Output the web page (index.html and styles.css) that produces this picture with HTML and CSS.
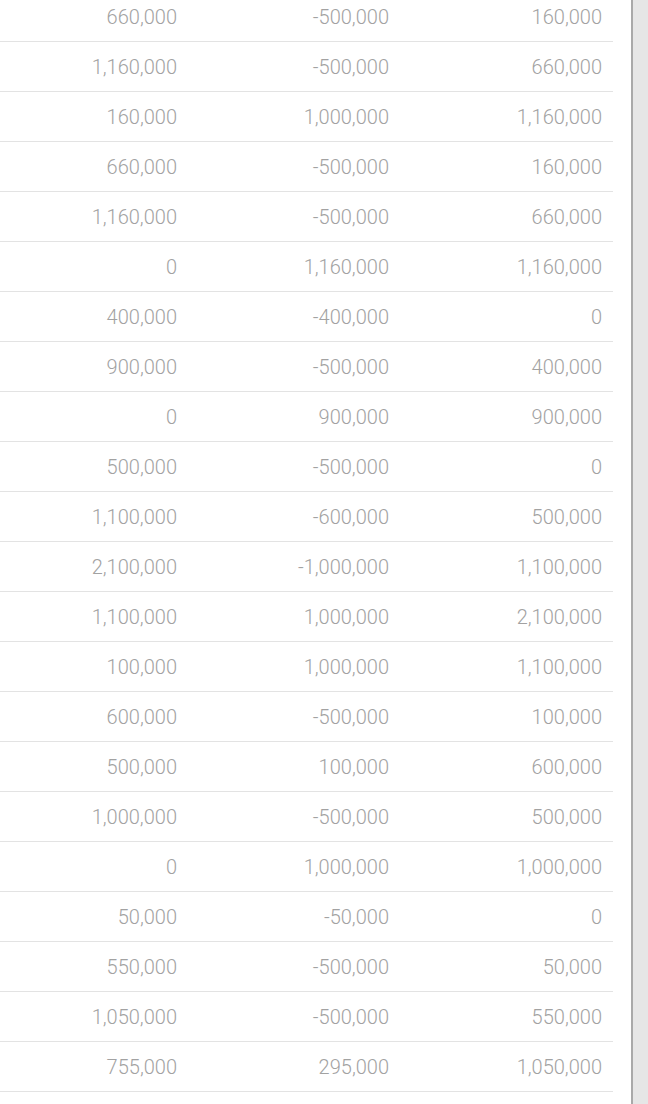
FILE: index.html
```html
<!DOCTYPE html>
<html>
<head>
<meta charset="utf-8">
<link rel="stylesheet" href="styles.css">
</head>
<body>
<div class="page">
  <div class="content">
    <div class="table">
      <div class="row"><span>660,000</span><span>-500,000</span><span>160,000</span></div>
      <div class="row"><span>1,160,000</span><span>-500,000</span><span>660,000</span></div>
      <div class="row"><span>160,000</span><span>1,000,000</span><span>1,160,000</span></div>
      <div class="row"><span>660,000</span><span>-500,000</span><span>160,000</span></div>
      <div class="row"><span>1,160,000</span><span>-500,000</span><span>660,000</span></div>
      <div class="row"><span>0</span><span>1,160,000</span><span>1,160,000</span></div>
      <div class="row"><span>400,000</span><span>-400,000</span><span>0</span></div>
      <div class="row"><span>900,000</span><span>-500,000</span><span>400,000</span></div>
      <div class="row"><span>0</span><span>900,000</span><span>900,000</span></div>
      <div class="row"><span>500,000</span><span>-500,000</span><span>0</span></div>
      <div class="row"><span>1,100,000</span><span>-600,000</span><span>500,000</span></div>
      <div class="row"><span>2,100,000</span><span>-1,000,000</span><span>1,100,000</span></div>
      <div class="row"><span>1,100,000</span><span>1,000,000</span><span>2,100,000</span></div>
      <div class="row"><span>100,000</span><span>1,000,000</span><span>1,100,000</span></div>
      <div class="row"><span>600,000</span><span>-500,000</span><span>100,000</span></div>
      <div class="row"><span>500,000</span><span>100,000</span><span>600,000</span></div>
      <div class="row"><span>1,000,000</span><span>-500,000</span><span>500,000</span></div>
      <div class="row"><span>0</span><span>1,000,000</span><span>1,000,000</span></div>
      <div class="row"><span>50,000</span><span>-50,000</span><span>0</span></div>
      <div class="row"><span>550,000</span><span>-500,000</span><span>50,000</span></div>
      <div class="row"><span>1,050,000</span><span>-500,000</span><span>550,000</span></div>
      <div class="row"><span>755,000</span><span>295,000</span><span>1,050,000</span></div>
    </div>
  </div>
  <div class="rail"></div>
</div>
</body>
</html>
```

FILE: styles.css
```css
html, body {
  margin: 0;
  padding: 0;
  background: #ffffff;
  height: 100%;
  overflow: hidden;
}

.page {
  display: flex;
  height: 1104px;
  overflow: hidden;
}

.content {
  flex: 0 0 631px;
  overflow: hidden;
}

.table {
  width: 613px;
  margin-top: -8px;
  font-family: Roboto, "Noto Sans", sans-serif;
  font-weight: 300;
  font-size: 20px;
  color: #a2a2a2;
}

.row {
  display: grid;
  grid-template-columns: 188px 212px 213px;
  height: 49px;
  border-bottom: 1px solid #e3e3e3;
  align-items: center;
}

.row span {
  text-align: right;
  padding-right: 11px;
}

.rail {
  flex: 1 1 auto;
  background: #e6e6e6;
  border-left: 2px solid #a9a9a9;
}
```
